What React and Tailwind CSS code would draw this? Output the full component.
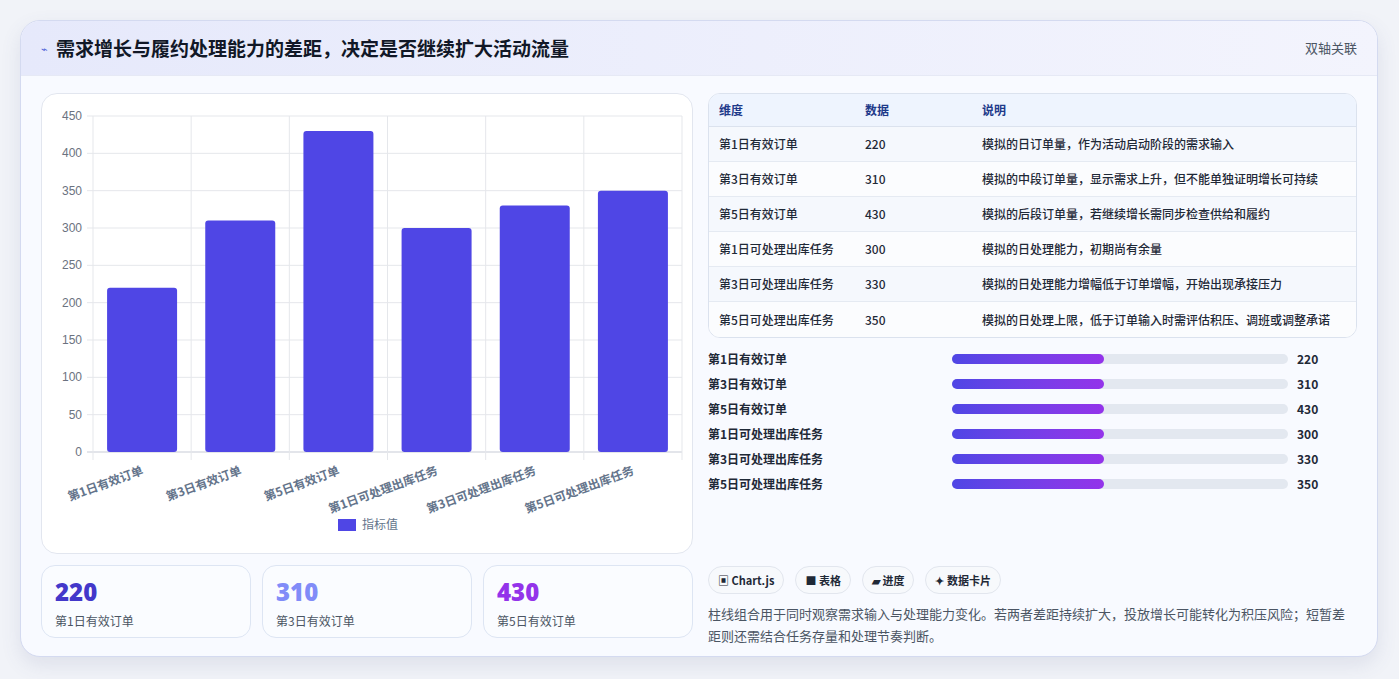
import React from "react";

const F = { fontFamily: '"Noto Sans CJK SC", "Noto Sans", sans-serif' };
const bars = [
  ["第1日有效订单", 220], ["第3日有效订单", 310], ["第5日有效订单", 430],
  ["第1日可处理出库任务", 300], ["第3日可处理出库任务", 330], ["第5日可处理出库任务", 350],
];
const desc = [
  "模拟的日订单量，作为活动启动阶段的需求输入",
  "模拟的中段订单量，显示需求上升，但不能单独证明增长可持续",
  "模拟的后段订单量，若继续增长需同步检查供给和履约",
  "模拟的日处理能力，初期尚有余量",
  "模拟的日处理能力增幅低于订单增幅，开始出现承接压力",
  "模拟的日处理上限，低于订单输入时需评估积压、调班或调整承诺",
];

function Chart() {
  const x0 = 51, x1 = 640, y0 = 22, y1 = 358;
  const cw = (x1 - x0) / 6;
  const ys = (v) => y1 - (v / 450) * (y1 - y0);
  return (
    <svg width="652" height="461" className="block">
      {[0, 50, 100, 150, 200, 250, 300, 350, 400, 450].map((v) => (
        <g key={v}>
          <line x1={x0 - 6} x2={x1} y1={ys(v)} y2={ys(v)} stroke={v === 0 ? "#c7cbd6" : "#e5e7eb"} />
          <text x={40} y={ys(v) + 4} textAnchor="end" fontSize="12" fill="#6b7280" fontFamily="Liberation Sans, sans-serif">{v}</text>
        </g>
      ))}
      {Array.from({ length: 7 }).map((_, i) => (
        <line key={i} x1={x0 + i * cw} x2={x0 + i * cw} y1={y0} y2={y1 + 8} stroke="#e5e7eb" />
      ))}
      {bars.map(([l, v], i) => {
        const cx = x0 + i * cw + cw / 2;
        return (
          <g key={l}>
            <rect x={cx - 35} y={ys(v)} width="70" height={y1 - ys(v)} rx="3" fill="#4f46e5" />
            <text x={cx + 2} y={y1 + 22} textAnchor="end" fontSize="12" fontWeight="700" fill="#64748b" transform={`rotate(-20 ${cx + 2} ${y1 + 22})`} style={F}>{l}</text>
          </g>
        );
      })}
      <rect x="296" y="425" width="18" height="12" fill="#4f46e5" />
      <text x="320" y="435" fontSize="12" fill="#64748b" style={F}>指标值</text>
    </svg>
  );
}

export default function App() {
  return (
    <div className="w-[1399px] h-[679px] bg-[#f1f3f8] pt-5 pl-5" style={F}>
      <div className="w-[1358px] h-[637px] rounded-[20px] border border-[#d4daf0] bg-[#f8faff] overflow-hidden shadow-[0_8px_20px_rgba(80,90,140,0.12)]">
        <div className="h-[55px] flex items-center justify-between px-5 bg-gradient-to-r from-[#e6e9fb] to-[#f3f4fd] border-b border-[#e6e9f5]">
          <div className="flex items-center gap-2">
            <span className="text-[#4f62d8] text-[11px]">⌁</span>
            <span className="text-[19px] font-bold text-[#111827]">需求增长与履约处理能力的差距，决定是否继续扩大活动流量</span>
          </div>
          <span className="text-[13px] text-[#4b5563]">双轴关联</span>
        </div>
        <div className="flex gap-[15px] px-5 pt-[17px]">
          <div className="w-[652px] flex flex-col gap-[11px]">
            <div className="h-[461px] rounded-[16px] border border-[#e2e6ef] bg-white"><Chart /></div>
            <div className="flex gap-[11px]">
              {[["220", "text-[#4338ca]"], ["310", "text-[#818cf8]"], ["430", "text-[#9333ea]"]].map(([v, c], i) => (
                <div key={v} className="flex-1 h-[73px] rounded-[14px] border border-[#dde5f3] bg-[#fafcff] px-[13px] pt-[12px]">
                  <div className={`text-[24px] font-extrabold leading-[28px] ${c}`} style={{ fontFamily: '"Open Sans", sans-serif' }}>{v}</div>
                  <div className="text-[12px] text-[#4b5563] mt-[6px]">{bars[i][0]}</div>
                </div>
              ))}
            </div>
          </div>
          <div className="w-[653px] flex flex-col">
            <div className="rounded-[12px] border border-[#dbe2ee] overflow-hidden bg-white text-[12px]">
              <div className="flex h-[33px] items-center bg-[#eef4fe] text-[#1e3a8a] font-semibold border-b border-[#dbe2ee]">
                <div className="w-[156px] pl-[10px]">维度</div><div className="w-[117px]">数据</div><div>说明</div>
              </div>
              {bars.map(([l, v], i) => (
                <div key={l} className={`flex h-[35px] items-center text-[#1f2937] font-medium ${i % 2 ? "bg-[#fbfcfe]" : "bg-[#f5f8fd]"} ${i < 5 ? "border-b border-[#e5eaf2]" : ""}`}>
                  <div className="w-[156px] pl-[10px]">{l}</div><div className="w-[117px]">{v}</div><div>{desc[i]}</div>
                </div>
              ))}
            </div>
            <div className="mt-[8px] flex flex-col">
              {bars.map(([l, v]) => (
                <div key={l} className="flex items-center h-[25px] text-[12px] font-bold text-[#1f2937]">
                  <div className="w-[244px]">{l}</div>
                  <div className="w-[336px] h-[10px] rounded-full bg-[#e3e8f0]">
                    <div className="h-full w-[152px] rounded-full bg-gradient-to-r from-[#4f46e5] to-[#9333ea]" />
                  </div>
                  <div className="ml-[9px]">{v}</div>
                </div>
              ))}
            </div>
            <div className="mt-[70px] flex gap-[11px] text-[11px] font-semibold text-[#1f2937]">
              {["▣ Chart.js", "■ 表格", "▰ 进度", "✦ 数据卡片"].map((t) => (
                <span key={t} className="h-[28px] px-[9px] flex items-center rounded-full border border-[#e2e6ee] bg-[#f7f9fc]">{t}</span>
              ))}
            </div>
            <p className="mt-[9px] text-[13px] leading-[22px] text-[#4b5563]">柱线组合用于同时观察需求输入与处理能力变化。若两者差距持续扩大，投放增长可能转化为积压风险；短暂差距则还需结合任务存量和处理节奏判断。</p>
          </div>
        </div>
      </div>
    </div>
  );
}
